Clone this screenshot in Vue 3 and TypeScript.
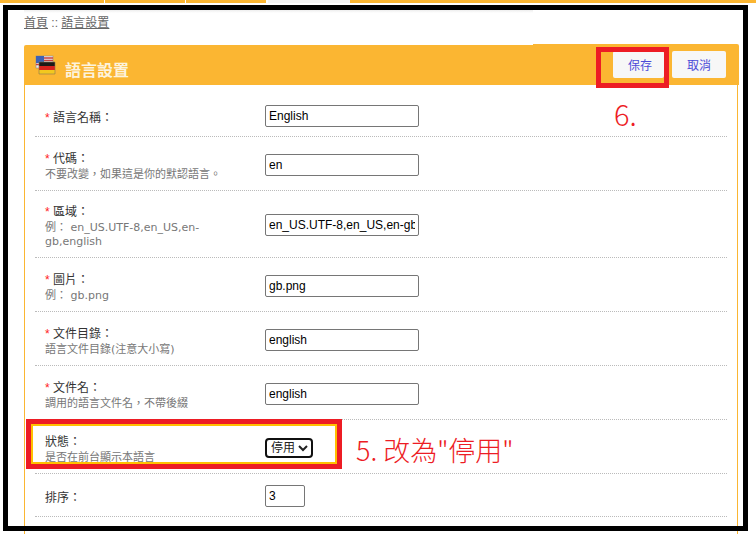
<script setup lang="ts">
interface Field {
  label: string
  required: boolean
  help?: string
  value: string
  short?: boolean
}
const fields: Field[] = [
  { label: '語言名稱：', required: true, value: 'English' },
  { label: '代碼：', required: true, help: '不要改變，如果這是你的默認語言。', value: 'en' },
  { label: '區域：', required: true, help: '例： en_US.UTF-8,en_US,en-gb,english', value: 'en_US.UTF-8,en_US,en-gb,english' },
  { label: '圖片：', required: true, help: '例： gb.png', value: 'gb.png' },
  { label: '文件目錄：', required: true, help: '語言文件目錄(注意大小寫)', value: 'english' },
  { label: '文件名：', required: true, help: '調用的語言文件名，不帶後綴', value: 'english' },
]
</script>

<template>
  <div class="page">
    <div class="strip">
      <span class="tab t1"></span>
      <span class="tab t2"></span>
      <span class="tab t3"></span>
      <span class="tab active"></span>
      <span class="tab rest"></span>
    </div>
    <div class="crumbs"><a href="#">首頁</a> :: <a href="#">語言設置</a></div>
    <section class="panel">
      <header class="head">
        <div class="title">
          <svg class="flag" width="22" height="21" viewBox="0 0 22 21">
            <rect x="1" y="1" width="17" height="12" fill="#e8e8ee" stroke="#8d8d90" stroke-width=".6"/>
            <rect x="1" y="1" width="8" height="7" fill="#3d62b5"/>
            <path d="M9 3h9M9 5.500h9M1 9.500h3" stroke="#c8403f" stroke-width="1.300"/>
            <rect x="4" y="7" width="16" height="4" fill="#1d1a17"/>
            <rect x="4" y="11" width="16" height="4" fill="#d8221c"/>
            <rect x="4" y="15" width="16" height="4" fill="#f3c81e"/>
            <path d="M4 7h16v12H4z" fill="none" stroke="#8a7a50" stroke-width=".6"/>
          </svg>
          <h1>語言設置</h1>
        </div>
        <div class="actions">
          <button class="btn save" type="button">保存</button>
          <button class="btn" type="button">取消</button>
        </div>
      </header>
      <div class="body">
        <div v-for="f in fields" :key="f.label" class="row" :class="{ tall: f.help }">
          <div class="label">
            <div class="name"><span class="req">*</span> {{ f.label }}</div>
            <div v-if="f.help" class="help">{{ f.help }}</div>
          </div>
          <input class="field" type="text" :value="f.value" />
        </div>
        <div class="row tall">
          <div class="label">
            <div class="name">狀態：</div>
            <div class="help">是否在前台顯示本語言</div>
          </div>
          <select class="sel">
            <option>停用</option>
            <option>啟用</option>
          </select>
        </div>
        <div class="row">
          <div class="label"><div class="name">排序：</div></div>
          <input class="field small" type="text" value="3" />
        </div>
      </div>
    </section>

    <div class="frame"></div>
    <div class="mark mark-save"></div>
    <div class="mark mark-status"><div class="inner"></div></div>
    <div class="note note-6">6.</div>
    <div class="note note-5">5. 改為"停用"</div>
  </div>
</template>

<style scoped>
.page {
  position: relative;
  width: 756px;
  height: 534px;
  overflow: hidden;
  background: #fff;
  font-family: "Liberation Sans", "Noto Sans CJK TC", sans-serif;
  font-size: 12px;
  color: #333;
}
.strip {
  display: flex;
  height: 3px;
}
.tab { background: #fbb632; margin-right: 1px; }
.t1 { width: 104px; }
.t2 { width: 80px; }
.t3 { width: 80px; }
.active { width: 82px; background: #f4f4f4; margin-right: 0; margin-left: 1px; }
.rest { flex: 1; margin-right: 0; }
.crumbs {
  margin: 0 0 0 24px;
  padding-top: 12px;
  height: 30px;
  box-sizing: border-box;
  line-height: 16px;
  color: #666;
  background: linear-gradient(#fff 7px, #eee 7px, #fff 10px) no-repeat 0 0 / 509px 100%;
}
.crumbs a { color: #666; text-decoration: underline; }
.panel {
  margin: 12px 0 0 24px;
  width: 715px;
}
.head {
  display: flex;
  height: 40px;
}
.title {
  width: 509px;
  background: #fbb632;
  border-radius: 2px 0 0 0;
  display: flex;
  align-items: center;
  padding-left: 11px;
  box-sizing: border-box;
  gap: 8px;
}
.flag { margin-top: 1px; }
.title h1 {
  margin: 8px 0 0;
  font-size: 16px;
  font-weight: bold;
  color: #fdf3dc;
}
.actions {
  flex: 1;
  margin-top: -1px;
  background: #fbb632;
  border-radius: 0 2px 0 0;
  display: flex;
  justify-content: flex-end;
  align-items: center;
  gap: 8px;
  padding-right: 13px;
}
.btn {
  width: 54px;
  height: 27px;
  border: 0;
  border-radius: 2px;
  background: #f7f7f7;
  color: #4b4bd8;
  font: 12px "Liberation Sans", "Noto Sans CJK TC", sans-serif;
  padding: 0;
}
.save { width: 51px; padding-left: 3px; }
.body {
  width: 714px;
  box-sizing: border-box;
  border-left: 1px solid #fbb632;
  border-right: 1px solid #fbb632;
  padding: 10px 10px 40px;
}
.row {
  display: flex;
  align-items: center;
  min-height: 43px;
  box-sizing: border-box;
  padding: 11px 0 9px;
  border-bottom: 1px dotted #bbb;
}
.row:first-child { min-height: 42px; padding-top: 10px; }
.row.tall { min-height: 54px; }
.row:not(.tall) .name { padding-top: 4px; }
.row.tall .name { padding-top: 1px; }
.row.tall .help { margin-bottom: -1px; }
.label {
  width: 230px;
  padding: 0 30px 0 10px;
  box-sizing: border-box;
  flex: none;
}
.name { line-height: 18px; color: #333; }
.req { color: #f22; }
.help {
  font-family: "DejaVu Sans", "Noto Sans CJK TC", sans-serif;
  font-size: 11px;
  line-height: 14px;
  color: #777;
}
.field {
  width: 154px;
  height: 22px;
  box-sizing: border-box;
  border: 1px solid #767676;
  border-radius: 2px;
  padding: 0 3px;
  font: 12px "Liberation Sans", sans-serif;
  color: #000;
  background: #fff;
  outline: none;
}
.small { width: 40px; }
.sel {
  width: 48px;
  height: 20px;
  box-sizing: border-box;
  border: 2px solid #101010;
  border-radius: 4px;
  background: #fff;
  color: #222;
  font: 12px "Liberation Sans", "Noto Sans CJK TC", sans-serif;
  padding: 0;
}
.frame {
  position: absolute;
  left: 3px;
  top: 5px;
  width: 745px;
  height: 526px;
  box-sizing: border-box;
  border: 5px solid #000;
  pointer-events: none;
}
.mark { position: absolute; box-sizing: border-box; border: 5px solid #ed1c24; }
.mark-save { left: 596px; top: 47px; width: 73px; height: 41px; }
.mark-status {
  left: 26px;
  top: 419px;
  width: 316px;
  height: 50px;
}
.mark-status .inner { height: 100%; box-sizing: border-box; border: 2px solid #ffc000; }
.note {
  position: absolute;
  color: #ed1c24;
  font-family: "Noto Sans CJK TC", sans-serif;
  font-weight: 300;
  font-size: 27px;
  line-height: 32px;
  white-space: nowrap;
}
.note-6 { left: 614px; top: 97px; font-size: 29px; }
.note-5 { left: 356px; top: 434px; }
</style>
